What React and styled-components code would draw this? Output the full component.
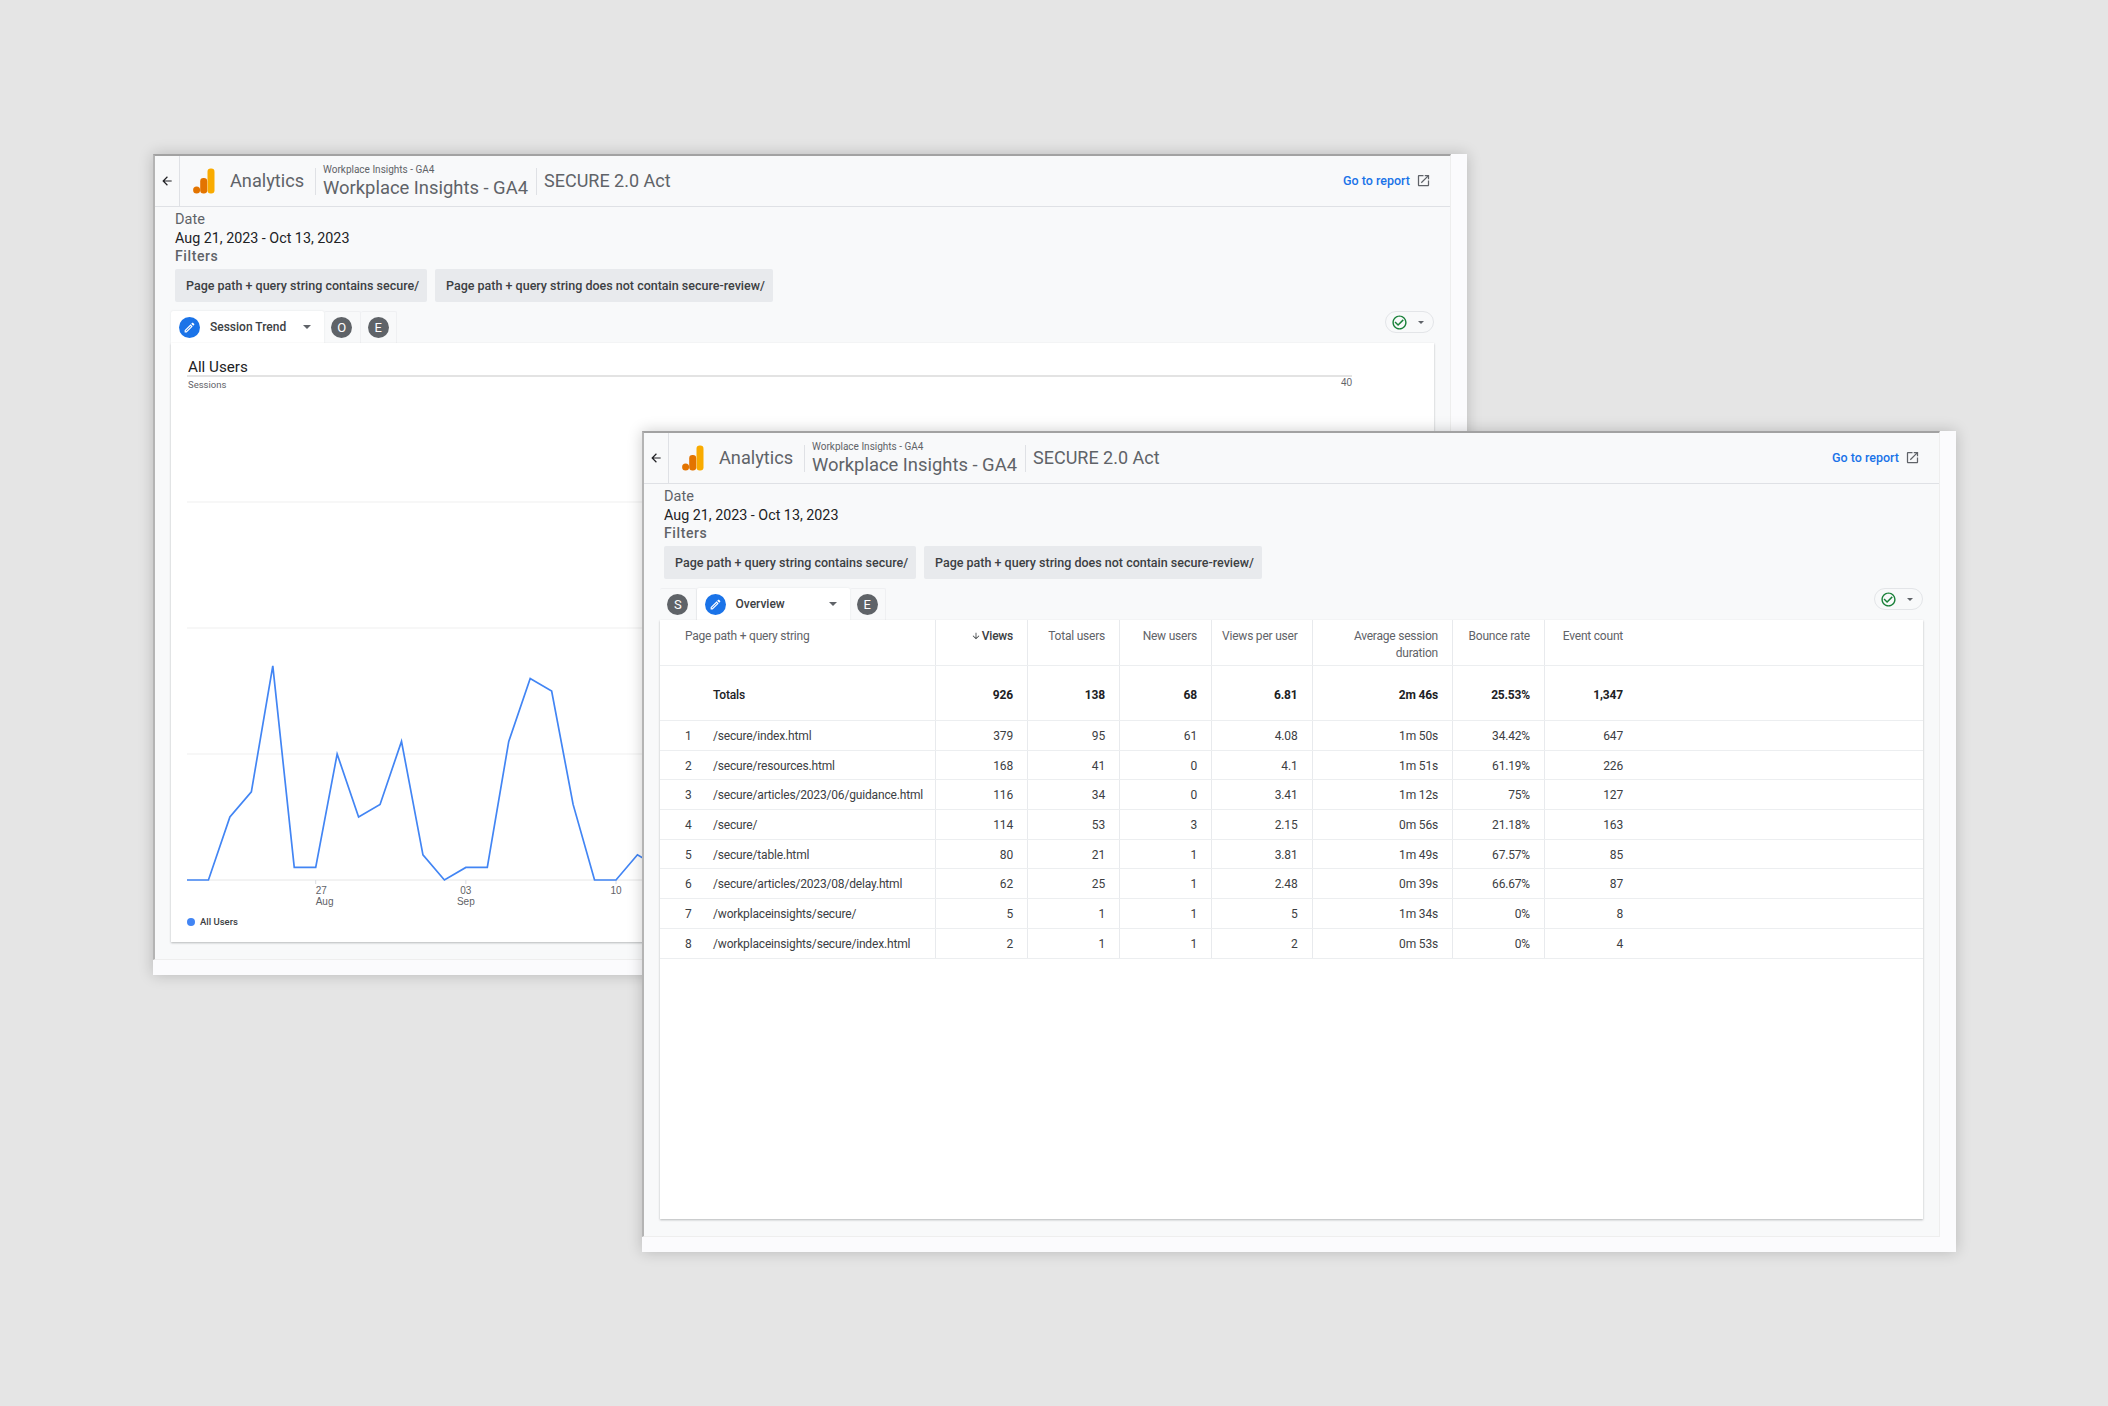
import React from 'react';
import styled, { createGlobalStyle } from 'styled-components';

const GlobalStyle = createGlobalStyle`
  * { box-sizing: border-box; }
  html, body { margin: 0; background: #e5e5e5; }
  body { font-family: Roboto, "Noto Sans", Arial, sans-serif; color: #3c4043; overflow: hidden; }
`;

const Canvas = styled.div`
  position: relative;
  width: 2108px;
  height: 1406px;
  background: #e5e5e5;
`;

const Window = styled.section`
  position: absolute;
  left: ${({ $x }) => $x}px;
  top: ${({ $y }) => $y}px;
  width: 1314px;
  height: 821px;
  padding: 0 16px 15px 0;
  background: #fbfbfd;
  box-shadow: 0 0 14px rgba(0, 0, 0, 0.2);
  display: flex;
`;

const Frame = styled.div`
  flex: 1;
  min-width: 0;
  display: flex;
  flex-direction: column;
  background: #f8f9fa;
  border-top: 2px solid #a2a2a2;
  border-left: 2px solid #b4b4b4;
  border-right: 1px solid #eeeeee;
  border-bottom: 1px solid #eeeeee;
`;

const Header = styled.header`
  height: 51px;
  flex: none;
  display: flex;
  align-items: center;
  border-bottom: 1px solid #dfe1e5;
  color: #5f6368;
`;

const BackButton = styled.div`
  width: 25px;
  height: 100%;
  flex: none;
  display: flex;
  align-items: center;
  justify-content: center;
  border-right: 1px solid #dfe1e5;
  color: #202124;
`;

const Logo = styled.svg`
  width: 22px;
  height: 26px;
  margin: 0 15px 0 13px;
  flex: none;
`;

const Product = styled.div`
  width: 85px;
  font-size: 18.2px;
  line-height: 26px;
  flex: none;
`;

const Divider = styled.div`
  width: 1px;
  height: 27px;
  flex: none;
  background: #dfe1e5;
`;

const Property = styled.div`
  width: 220px;
  padding-left: 7px;
  flex: none;
`;

const Account = styled.div`
  font-size: 10px;
  line-height: 12px;
`;

const PropertyName = styled.div`
  font-size: 18.4px;
  line-height: 23px;
  white-space: nowrap;
`;

const ReportName = styled.div`
  margin-left: 7px;
  margin-top: -1px;
  font-size: 18px;
  line-height: 24px;
  white-space: nowrap;
`;

const ReportLink = styled.a`
  margin-left: auto;
  margin-right: 19px;
  margin-top: -1px;
  display: flex;
  align-items: center;
  gap: 6px;
  font-size: 12.5px;
  font-weight: 500;
  color: #1a73e8;
`;

const Body = styled.div`
  flex: 1;
  min-height: 0;
  display: flex;
  flex-direction: column;
  padding: 5px 16px 17px 20px;
`;

const DateLabel = styled.div`
  font-size: 14.5px;
  line-height: 16px;
  color: #5f6368;
`;

const DateRange = styled.div`
  margin-top: 1px;
  font-size: 14.3px;
  line-height: 18px;
  color: #202124;
`;

const FiltersLabel = styled.div`
  font-size: 14px;
  line-height: 18px;
  font-weight: 500;
  letter-spacing: 0.6px;
  color: #5f6368;
`;

const Chips = styled.div`
  margin-top: 4px;
  display: flex;
  gap: 8px;
`;

const Chip = styled.div`
  height: 33px;
  padding: 0 8px 0 11px;
  display: flex;
  align-items: center;
  border-radius: 2px;
  background: #e8eaed;
  font-size: 12.5px;
  font-weight: 500;
  color: #3c4043;
  white-space: nowrap;
`;

const Toolbar = styled.div`
  margin: 9px 0 0 -4px;
  height: 32px;
  flex: none;
  display: flex;
  justify-content: space-between;
  align-items: flex-start;
`;

const Tabs = styled.div`
  display: flex;
  height: 100%;
`;

const PageTab = styled.div`
  width: 36.5px;
  height: 100%;
  display: flex;
  align-items: center;
  justify-content: center;
  border-top: 1px solid #eff0f2;
  border-right: 1px solid #eff0f2;
  border-radius: 2px 2px 0 0;
`;

const ActiveTab = styled.div`
  width: 153px;
  height: 100%;
  padding: 0 13px 0 8px;
  display: flex;
  align-items: center;
  background: #fff;
  border-radius: 2px 2px 0 0;
  box-shadow: 0 0 2px rgba(60, 64, 67, 0.12);
  font-size: 12px;
  font-weight: 500;
  color: #3c4043;
`;

const TabName = styled.span`
  margin-left: 10px;
  flex: 1;
  white-space: nowrap;
`;

const Badge = styled.span`
  width: 21px;
  height: 21px;
  display: flex;
  align-items: center;
  justify-content: center;
  border-radius: 50%;
  background: #5f6368;
  color: #fff;
  font-size: 13px;
`;

const EditBadge = styled(Badge)`
  background: #1a73e8;
`;

const Caret = styled.span`
  width: 0;
  height: 0;
  border-left: ${({ $size }) => $size}px solid transparent;
  border-right: ${({ $size }) => $size}px solid transparent;
  border-top: ${({ $size }) => $size}px solid #5f6368;
`;

const StatusPill = styled.div`
  width: 49px;
  height: 22px;
  padding: 0 9px 0 5px;
  display: flex;
  align-items: center;
  justify-content: space-between;
  border: 1px solid #e3e5e8;
  border-radius: 11px;
`;

const Card = styled.div`
  flex: 1;
  min-height: 0;
  margin-left: -4px;
  background: #fff;
  box-shadow: 0 1px 2px rgba(60, 64, 67, 0.35);
`;

const ChartCard = styled(Card)`
  padding: 15px 82px 0 16px;
`;

const ChartTitle = styled.div`
  height: 19px;
  padding-left: 1px;
  font-size: 15.2px;
  line-height: 19px;
  color: #202124;
  border-bottom: 2px solid #e3e3e3;
`;

const AxisRow = styled.div`
  height: 14px;
  padding-left: 1px;
  display: flex;
  justify-content: space-between;
  font-size: 9.5px;
  line-height: 15px;
  color: #5f6368;
`;

const MaxValue = styled.span`
  margin-top: -2px;
  font-size: 10px;
  font-family: "Liberation Sans", Arial, sans-serif;
`;

const ChartSvg = styled.svg`
  display: block;
  width: 1164px;
  height: 519px;
  overflow: visible;
`;

const Legend = styled.div`
  margin-top: 6px;
  display: flex;
  align-items: center;
  gap: 5px;
  font-size: 9.5px;
  line-height: 12px;
  font-weight: 500;
  color: #3c4043;
`;

const LegendDot = styled.span`
  width: 8px;
  height: 8px;
  border-radius: 50%;
  background: #4285f4;
`;

const COLUMNS = '276px 92px 92px 92px 100.5px 140.5px 92px 92px 1fr';

const Row = styled.div`
  display: grid;
  grid-template-columns: ${COLUMNS};
  height: ${({ $height }) => $height}px;
  border-bottom: 1px solid #eceef0;
  font-size: 12px;
  letter-spacing: -0.17px;
  color: #3c4043;
`;

const Cell = styled.div`
  padding: 1px 14px 0;
  display: flex;
  align-items: center;
  justify-content: flex-end;
  border-right: 1px solid #e8eaed;
  white-space: nowrap;
`;

const HeadCell = styled(Cell)`
  align-items: flex-start;
  padding: 8px 14px 0 6px;
  line-height: 17px;
  text-align: right;
  white-space: normal;
  letter-spacing: -0.22px;
  color: ${({ $active }) => ($active ? '#3c4043' : '#5f6368')};
  font-weight: ${({ $active }) => ($active ? 500 : 400)};
`;

const DimHeadCell = styled(HeadCell)`
  justify-content: flex-start;
  padding-left: 25px;
`;

const LastHeadCell = styled(HeadCell)`
  border-right: 0;
`;

const DimCell = styled(Cell)`
  justify-content: flex-start;
  padding-left: 25px;
`;

const TotalValue = styled(Cell)`
  padding-top: 3px;
  font-weight: 700;
  color: #202124;
`;

const LastTotal = styled(TotalValue)`
  border-right: 0;
`;

const LastCell = styled(Cell)`
  border-right: 0;
`;

const TotalDim = styled(DimCell)`
  padding-top: 3px;
`;

const RowIndex = styled.span`
  width: 28px;
  flex: none;
`;

const TotalName = styled.span`
  font-weight: 500;
  color: #202124;
`;

const SortArrow = styled.svg`
  width: 10px;
  height: 10px;
  margin: 3px 1px 0 0;
  flex: none;
`;

const BackIcon = () => (
  <svg width="14" height="14" viewBox="0 0 24 24" fill="currentColor">
    <path d="M20 11H7.83l5.59-5.59L12 4l-8 8 8 8 1.41-1.41L7.83 13H20v-2z" />
  </svg>
);

const AnalyticsLogo = () => (
  <Logo viewBox="0 0 22 26">
    <rect x="14.5" y="0.5" width="7" height="25" rx="3.2" fill="#f9ab00" />
    <rect x="7.2" y="10" width="7" height="15.5" rx="3.2" fill="#e37400" />
    <circle cx="3.6" cy="22" r="3.5" fill="#e37400" />
  </Logo>
);

const OpenIcon = () => (
  <svg width="15" height="15" viewBox="0 0 24 24" fill="#5f6368">
    <path d="M19 19H5V5h7V3H5c-1.11 0-2 .9-2 2v14c0 1.1.89 2 2 2h14c1.1 0 2-.9 2-2v-7h-2v7zM14 3v2h3.59l-9.83 9.83 1.41 1.41L19 6.41V10h2V3h-7z" />
  </svg>
);

const PencilIcon = () => (
  <svg width="13" height="13" viewBox="0 0 24 24" fill="#fff">
    <path d="M14.06 9.02l.92.92L5.92 19H5v-.92l9.06-9.06M17.66 3c-.25 0-.51.1-.7.29l-1.83 1.83 3.75 3.75 1.83-1.83c.39-.39.39-1.02 0-1.41l-2.34-2.34c-.2-.2-.45-.29-.71-.29zm-3.6 3.19L3 17.25V21h3.75L17.81 9.94l-3.75-3.75z" />
  </svg>
);

const CheckIcon = () => (
  <svg width="17" height="17" viewBox="0 0 24 24" fill="#188038">
    <path d="M16.59 7.58L10 14.17l-3.59-3.58L5 12l5 5 8-8zM12 2C6.48 2 2 6.48 2 12s4.48 10 10 10 10-4.48 10-10S17.52 2 12 2zm0 18c-4.42 0-8-3.58-8-8s3.58-8 8-8 8 3.58 8 8-3.58 8-8 8z" />
  </svg>
);

const Report = ({ x, y, tabs, children }) => (
  <Window $x={x} $y={y}>
    <Frame>
      <Header>
        <BackButton><BackIcon /></BackButton>
        <AnalyticsLogo />
        <Product>Analytics</Product>
        <Divider />
        <Property>
          <Account>Workplace Insights - GA4</Account>
          <PropertyName>Workplace Insights - GA4</PropertyName>
        </Property>
        <Divider />
        <ReportName>SECURE 2.0 Act</ReportName>
        <ReportLink>Go to report <OpenIcon /></ReportLink>
      </Header>
      <Body>
        <DateLabel>Date</DateLabel>
        <DateRange>Aug 21, 2023 - Oct 13, 2023</DateRange>
        <FiltersLabel>Filters</FiltersLabel>
        <Chips>
          <Chip>Page path + query string contains secure/</Chip>
          <Chip>Page path + query string does not contain secure-review/</Chip>
        </Chips>
        <Toolbar>
          <Tabs>
            {tabs.map((tab) =>
              tab.active ? (
                <ActiveTab key={tab.name}>
                  <EditBadge><PencilIcon /></EditBadge>
                  <TabName>{tab.name}</TabName>
                  <Caret $size={4} />
                </ActiveTab>
              ) : (
                <PageTab key={tab.name}><Badge>{tab.name}</Badge></PageTab>
              )
            )}
          </Tabs>
          <StatusPill>
            <CheckIcon />
            <Caret $size={3} />
          </StatusPill>
        </Toolbar>
        {children}
      </Body>
    </Frame>
  </Window>
);

// sessions per day, only the first weeks show from behind the front window
const sessions = [0, 0, 5, 7, 17, 1, 1, 10, 5, 6, 11, 2, 0, 1, 1, 11, 16, 15, 6, 0, 0, 2, 1];
const STEP = 21.45;
const BASE = 489;
const UNIT = 12.6;

const SessionChart = () => (
  <ChartSvg viewBox="0 0 1164 519">
    {[111, 237, 363].map((gy) => (
      <line key={gy} x1="0" x2="1164" y1={gy} y2={gy} stroke="#efefef" />
    ))}
    <line x1="0" x2="1164" y1={BASE} y2={BASE} stroke="#e6e6e6" />
    {[6, 13, 20].map((i) => (
      <line key={i} x1={i * STEP} x2={i * STEP} y1={BASE} y2={BASE + 4} stroke="#dadce0" />
    ))}
    <polyline
      fill="none"
      stroke="#4285f4"
      strokeWidth="1.7"
      points={sessions.map((v, i) => `${i * STEP},${BASE - v * UNIT}`).join(' ')}
    />
    <g fontFamily="Liberation Sans, Arial, sans-serif" fontSize="10" fill="#5f6368">
      <text x={6 * STEP} y="503">27</text>
      <text x={6 * STEP} y="514">Aug</text>
      <text x={13 * STEP} y="503" textAnchor="middle">03</text>
      <text x={13 * STEP} y="514" textAnchor="middle">Sep</text>
      <text x={20 * STEP} y="503" textAnchor="middle">10</text>
    </g>
  </ChartSvg>
);

const rows = [
  ['/secure/index.html', '379', '95', '61', '4.08', '1m 50s', '34.42%', '647'],
  ['/secure/resources.html', '168', '41', '0', '4.1', '1m 51s', '61.19%', '226'],
  ['/secure/articles/2023/06/guidance.html', '116', '34', '0', '3.41', '1m 12s', '75%', '127'],
  ['/secure/', '114', '53', '3', '2.15', '0m 56s', '21.18%', '163'],
  ['/secure/table.html', '80', '21', '1', '3.81', '1m 49s', '67.57%', '85'],
  ['/secure/articles/2023/08/delay.html', '62', '25', '1', '2.48', '0m 39s', '66.67%', '87'],
  ['/workplaceinsights/secure/', '5', '1', '1', '5', '1m 34s', '0%', '8'],
  ['/workplaceinsights/secure/index.html', '2', '1', '1', '2', '0m 53s', '0%', '4'],
];

const PagesTable = () => (
  <>
    <Row $height={46}>
      <DimHeadCell>Page path + query string</DimHeadCell>
      <HeadCell $active>
        <SortArrow viewBox="0 0 24 24" fill="#3c4043">
          <path d="M20 12l-1.41-1.41L13 16.17V4h-2v12.17l-5.58-5.59L4 12l8 8 8-8z" />
        </SortArrow>
        Views
      </HeadCell>
      <HeadCell>Total users</HeadCell>
      <HeadCell>New users</HeadCell>
      <HeadCell>Views per user</HeadCell>
      <HeadCell>Average session duration</HeadCell>
      <HeadCell>Bounce rate</HeadCell>
      <LastHeadCell>Event count</LastHeadCell>
    </Row>
    <Row $height={55}>
      <TotalDim>
        <RowIndex />
        <TotalName>Totals</TotalName>
      </TotalDim>
      <TotalValue>926</TotalValue>
      <TotalValue>138</TotalValue>
      <TotalValue>68</TotalValue>
      <TotalValue>6.81</TotalValue>
      <TotalValue>2m 46s</TotalValue>
      <TotalValue>25.53%</TotalValue>
      <LastTotal>1,347</LastTotal>
    </Row>
    {rows.map(([path, ...values], i) => (
      <Row key={path} $height={29.7}>
        <DimCell>
          <RowIndex>{i + 1}</RowIndex>
          {path}
        </DimCell>
        {values.slice(0, -1).map((value, c) => (
          <Cell key={c}>{value}</Cell>
        ))}
        <LastCell>{values[values.length - 1]}</LastCell>
      </Row>
    ))}
  </>
);

const App = () => (
  <Canvas>
    <GlobalStyle />
    <Report
      x={153}
      y={154}
      tabs={[{ name: 'Session Trend', active: true }, { name: 'O' }, { name: 'E' }]}
    >
      <ChartCard>
        <ChartTitle>All Users</ChartTitle>
        <AxisRow>
          <span>Sessions</span>
          <MaxValue>40</MaxValue>
        </AxisRow>
        <SessionChart />
        <Legend>
          <LegendDot />
          All Users
        </Legend>
      </ChartCard>
    </Report>
    <Report
      x={642}
      y={431}
      tabs={[{ name: 'S' }, { name: 'Overview', active: true }, { name: 'E' }]}
    >
      <Card>
        <PagesTable />
      </Card>
    </Report>
  </Canvas>
);

export default App;
